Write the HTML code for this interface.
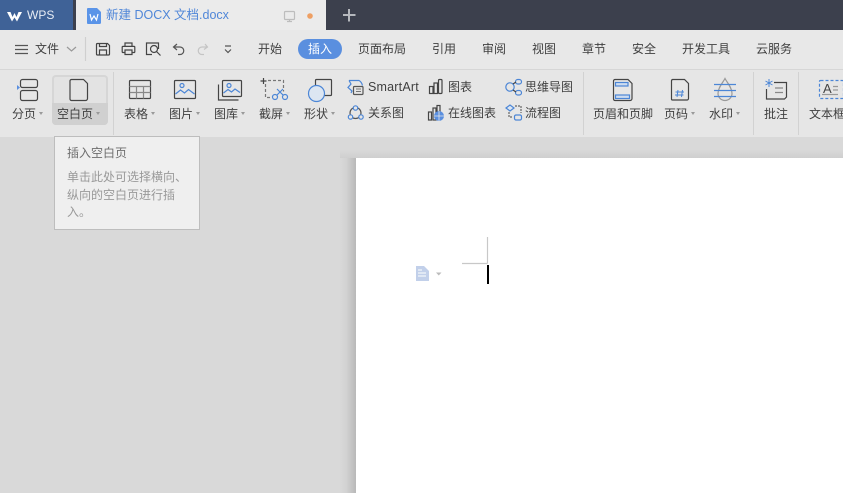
<!DOCTYPE html>
<html><head><meta charset="utf-8">
<style>
html,body{margin:0;padding:0;width:843px;height:493px;overflow:hidden;background:#d9d9d9}
body{position:relative;font-family:"Liberation Sans","Noto Sans CJK SC",sans-serif;font-size:12px;color:#3f3f3f}
.a{position:absolute}
.t{position:absolute;white-space:nowrap;line-height:16px;height:16px;transform:translateX(-50%)}
.l{position:absolute;white-space:nowrap;line-height:16px;height:16px}
svg{position:absolute;left:0;top:0;overflow:hidden}
.tri{position:absolute;width:0;height:0;border-left:2.5px solid transparent;border-right:2.5px solid transparent;border-top:3px solid #999}
.sep{position:absolute;width:1px;background:#d2d2d2;top:72px;height:63px}
</style></head><body>
<div class="a" style="left:0;top:0;width:843px;height:30px;background:#3c404d"></div>
<div class="a" style="left:0;top:0;width:73px;height:30px;background:#3f6297"></div>
<div class="a" style="left:76px;top:0;width:250px;height:30px;background:#ebebeb"></div>
<div class="a" style="left:0;top:30px;width:843px;height:39px;background:#e8e8e8;border-bottom:1px solid #d6d6d6;box-sizing:content-box"></div>
<div class="a" style="left:0;top:70px;width:843px;height:67px;background:#e6e6e6"></div>
<div class="a" style="left:0;top:137px;width:843px;height:356px;background:#d9d9d9"></div>

<div class="a" style="left:52px;top:75px;width:56px;height:50px;background:#e3e3e3;border-radius:4px;box-shadow:inset 0 0 0 2px #d6d6d6"></div>
<div class="a" style="left:52px;top:103px;width:56px;height:22px;background:#d0d0d0;border-radius:0 0 4px 4px"></div>

<div class="a" style="left:298px;top:39px;width:44px;height:20px;border-radius:10px;background:#5a8fdf"></div>

<div class="a" style="left:340px;top:158px;width:16px;height:335px;background:linear-gradient(90deg,#d9d9d9,#d2d2d2 40%,#b8b8b8)"></div>
<div class="a" style="left:340px;top:150px;width:503px;height:8px;background:linear-gradient(180deg,#d9d9d9,#cfcfcf)"></div>
<div class="a" style="left:356px;top:158px;width:487px;height:335px;background:#fff"></div>
<div class="a" style="left:54px;top:136px;width:144px;height:92px;background:#efefef;border:1px solid #bdbdbd"></div>

<svg width="843" height="493" fill="none" stroke-width="1.2">
<!-- WPS logo -->
<path d="M7 12h3.500l2 5 2-4 2 4 2-5h3.500l-5 9.500-2.500-4-2.500 4z" fill="#fff" stroke="none"/>
<!-- doc icon -->
<path d="M88 8h9l4 4v10.500a1.500 1.500 0 0 1-1.500 1.500h-11.500a1 1 0 0 1-1-1v-14a1 1 0 0 1 1-1z" fill="#5a94e8" stroke="none"/>
<path d="M90 14l1.500 6 2.500-4 2.500 4 1.500-6" stroke="#fff"/>
<!-- monitor, dot, plus -->
<rect x="284.500" y="11.500" width="10" height="8" rx="1" stroke="#bdbdbd"/><path d="M289.500 19.500v2M287 21.500h5" stroke="#bdbdbd"/>
<circle cx="310" cy="16" r="2.800" fill="#ee9f63"/>
<path d="M349 9v12.500M343 15h12.500" stroke="#b5b8bd" stroke-width="2"/>
<!-- menu line icon -->
<path d="M15 45.500h13M15 49.500h13M15 53.500h13" stroke="#555"/>
<path d="M67 47l4.500 4 4.500-4" stroke="#999"/>
<path d="M85.500 37v24" stroke="#cfcfcf"/>
<!-- save -->
<path d="M97.500 43.500h10l2 2v8.500a1 1 0 0 1-1 1h-11a1 1 0 0 1-1-1v-9.500a1 1 0 0 1 1-1z" stroke="#444"/><path d="M99.500 43.500v3h7v-3M99.500 55v-5h7v5" stroke="#444"/>
<!-- print -->
<path d="M125 46.500v-3.500h7v3.500M125 52.500h-2a.8.800 0 0 1-.8-.8v-4.500a.8.800 0 0 1 .8-.8h11a.8.800 0 0 1 .8.800v4.500a.8.800 0 0 1-.8.800h-2M125 50h7v4.500h-7z" stroke="#444"/>
<!-- preview -->
<path d="M152 54.500h-5.500v-11.500h12v6" stroke="#444"/><circle cx="154" cy="49" r="3.500" stroke="#444"/><path d="M156.500 51.500l4 4" stroke="#444"/>
<!-- undo redo -->
<path d="M177 44l-3.500 3 3.500 3M173.500 47h6.500a3.500 3.500 0 0 1 0 7.500h-2" stroke="#555"/>
<path d="M205 44l2.500 3-3.500 2.500M207 47h-5a3.500 3.500 0 0 0 0 7.500h2" stroke="#c4c4c4"/>
<path d="M225 46h6M225 49.500l3 3 3-3" stroke="#555"/>

<!-- 分页 -->
<rect x="20.500" y="79.500" width="17" height="8" rx="2" stroke="#444"/>
<rect x="20.500" y="90.500" width="17" height="10" rx="2" stroke="#444"/>
<path d="M17 85l3 2.500-3 2.500z" fill="#5a8fdf" stroke="none"/>
<!-- blank page -->
<path d="M71.500 79.500h12l4 4v15a2 2 0 0 1-2 2h-14a1.500 1.500 0 0 1-1.500-1.500v-18a1.500 1.500 0 0 1 1.500-1.500z" stroke="#444"/>
<!-- table -->
<rect x="129.500" y="80.500" width="21" height="18" rx="1" stroke="#444"/><path d="M129.500 86.500h21M129.500 92.500h21M136.500 86.500v12M143.500 86.500v12" stroke="#888"/>
<!-- picture -->
<rect x="174.500" y="80.500" width="21" height="18" rx="1" stroke="#444"/><circle cx="182" cy="85.500" r="2" stroke="#4c86d6"/><path d="M175.500 94l5-4 4 3 4-3.500 6 4.500" stroke="#4c86d6"/>
<!-- gallery -->
<rect x="222.500" y="80.500" width="19" height="16" rx="1" stroke="#444"/><path d="M218.500 84.500v15.500h20" stroke="#444"/><circle cx="229" cy="85.500" r="2" stroke="#4c86d6"/><path d="M223.500 93l4.500-3.500 3.500 2.500 3.500-3 5 3.500" stroke="#4c86d6"/>
<!-- screenshot -->
<path d="M263.500 78v6M260.500 81h6" stroke="#444"/>
<path d="M268 80.500h15.500v11M265.500 84v13.500h6" stroke="#777" stroke-dasharray="3 2"/>
<circle cx="275" cy="97" r="2.500" stroke="#4c86d6"/><circle cx="285" cy="97" r="2.500" stroke="#4c86d6"/><path d="M277 95l6-6M283 95l-6-6" stroke="#4c86d6"/>
<!-- shape -->
<rect x="315.500" y="79.500" width="16" height="16" rx="1" stroke="#444"/>
<circle cx="316.500" cy="93.500" r="8" fill="#dce6f2" stroke="#4c86d6"/>
<!-- smartart -->
<path d="M349 80.500h10c2 1 3 3 3.500 5M349 80.500l2 3.500-3 3.500 4 3.500-1 2" stroke="#4c86d6"/><rect x="353.500" y="86.500" width="9.500" height="8" rx="1" fill="#e6e6e6" stroke="#555"/><path d="M356 89h5M356 91.500h5" stroke="#777" stroke-width="1"/>
<!-- relation -->
<circle cx="355.500" cy="113" r="5.500" stroke="#555"/><circle cx="355.500" cy="108" r="2.200" fill="#e6e6e6" stroke="#4c86d6"/><circle cx="350.500" cy="117" r="2.200" fill="#e6e6e6" stroke="#4c86d6"/><circle cx="361" cy="117" r="2.200" fill="#e6e6e6" stroke="#4c86d6"/>
<!-- chart -->
<rect x="429.500" y="86.500" width="3.500" height="7" stroke="#444"/><rect x="434" y="83" width="3.500" height="10.500" stroke="#444"/><rect x="438.500" y="79.500" width="3.500" height="14" rx="1" stroke="#444"/>
<!-- online chart -->
<rect x="428.500" y="112" width="3" height="8" stroke="#444"/><rect x="433" y="108" width="3" height="12" stroke="#444"/><rect x="437" y="105.500" width="3" height="6" stroke="#444"/>
<circle cx="439" cy="116" r="5" fill="#5a8fdf" stroke="none"/><path d="M434 116h10M439 111v10" stroke="#e6e6e6" stroke-width=".8"/>
<!-- mind -->
<circle cx="510" cy="87" r="4.200" stroke="#4c86d6"/><rect x="515.500" y="79.500" width="6" height="4.500" rx="2.200" stroke="#4c86d6"/><rect x="515.500" y="90.500" width="6" height="4.500" rx="2.200" stroke="#4c86d6"/><path d="M513 84l3-2M513 90l3 2" stroke="#444"/>
<!-- flow -->
<path d="M506 108l4-3 4 3-4 3z" fill="#dce6f2" stroke="#4c86d6"/><rect x="514.500" y="115" width="7" height="5" rx="1.500" stroke="#4c86d6"/><path d="M515 106h6v7M509 112v5h4" stroke="#666" stroke-dasharray="2 1"/>
<!-- header footer -->
<path d="M615 79.500h13l4 4v15a2 2 0 0 1-2 2h-15a1.500 1.500 0 0 1-1.500-1.500v-18a1.500 1.500 0 0 1 1.500-1.500z" stroke="#444"/>
<rect x="615.500" y="82.500" width="12.500" height="3.500" fill="#cddcf0" stroke="#4c86d6"/><rect x="615.500" y="95" width="14" height="3.500" fill="#cddcf0" stroke="#4c86d6"/>
<!-- page number -->
<path d="M672.500 79.500h12l4 4v15a1.500 1.500 0 0 1-1.500 1.500h-14.500a1 1 0 0 1-1-1v-18a1.500 1.500 0 0 1 1-1.500z" stroke="#444"/>
<path d="M678 90l-1 7M682.500 90l-1 7M675.500 92h8.500M675 95h8.500" stroke="#4c86d6" stroke-width="1"/>
<!-- watermark -->
<path d="M725 78.500c2 4 7 9 7 15a7 7 0 0 1-14 0c0-6 5-11 7-15z" stroke="#999"/>
<path d="M714 84.500h22M714 90.500h22M714 96.500h22" stroke="#4c86d6"/>
<!-- comment -->
<path d="M774 82.500h12.500v14.500l-2 2h-18v-10" stroke="#444"/><path d="M775 88h8M775 92.500h8" stroke="#888"/>
<path d="M769 79v8M765.500 81l7 4M772.500 81l-7 4" stroke="#4c86d6" stroke-width="1"/>
<!-- textbox -->
<rect x="819.500" y="80.500" width="24" height="18" rx="1" stroke="#4c86d6" stroke-dasharray="3 2"/>
<path d="M833 86.500h5M833 90h5" stroke="#999"/><path d="M822 94.500h16" stroke="#999"/>
<!-- page corner -->
<path d="M487.500 237v26.500M462 263.500h25.500" stroke="#c8c8c8"/>
<rect x="487" y="265" width="2" height="19" fill="#000" stroke="none"/>
<path d="M416 266h8l5 5v10h-13z" fill="#c2d0ea" stroke="none"/>
<path d="M418 270h4M418 273h8M418 276h8" stroke="#fff" stroke-width="1"/>
<path d="M436 272.500h5.500l-2.750 3z" fill="#bbb" stroke="none"/>
</svg>

<div class="l" style="left:27px;top:7px;color:#e8edf5;font-size:12px">WPS</div>
<div class="l" style="left:106px;top:7px;color:#4f86d8;font-size:12.500px">新建 DOCX 文档.docx</div>
<div class="l" style="left:35px;top:41px">文件</div>
<div class="t" style="left:270px;top:41px">开始</div>
<div class="t" style="left:320px;top:41px;color:#fff">插入</div>
<div class="t" style="left:382px;top:41px">页面布局</div>
<div class="t" style="left:444px;top:41px">引用</div>
<div class="t" style="left:494px;top:41px">审阅</div>
<div class="t" style="left:544px;top:41px">视图</div>
<div class="t" style="left:594px;top:41px">章节</div>
<div class="t" style="left:644px;top:41px">安全</div>
<div class="t" style="left:706px;top:41px">开发工具</div>
<div class="t" style="left:774px;top:41px">云服务</div>

<div class="t" style="left:24px;top:106px">分页</div><div class="tri" style="left:39px;top:112px"></div>
<div class="t" style="left:75px;top:106px">空白页</div><div class="tri" style="left:96px;top:112px"></div>
<div class="t" style="left:136px;top:106px">表格</div><div class="tri" style="left:151px;top:112px"></div>
<div class="t" style="left:181px;top:106px">图片</div><div class="tri" style="left:196px;top:112px"></div>
<div class="t" style="left:226px;top:106px">图库</div><div class="tri" style="left:241px;top:112px"></div>
<div class="t" style="left:271px;top:106px">截屏</div><div class="tri" style="left:286px;top:112px"></div>
<div class="t" style="left:316px;top:106px">形状</div><div class="tri" style="left:331px;top:112px"></div>
<div class="l" style="left:368px;top:79px;font-size:12.500px;letter-spacing:.2px">SmartArt</div>
<div class="l" style="left:368px;top:105px">关系图</div>
<div class="l" style="left:448px;top:79px">图表</div>
<div class="l" style="left:448px;top:105px">在线图表</div>
<div class="l" style="left:525px;top:79px">思维导图</div>
<div class="l" style="left:525px;top:105px">流程图</div>
<div class="t" style="left:623px;top:106px">页眉和页脚</div>
<div class="t" style="left:676px;top:106px">页码</div><div class="tri" style="left:691px;top:112px"></div>
<div class="t" style="left:721px;top:106px">水印</div><div class="tri" style="left:736px;top:112px"></div>
<div class="t" style="left:776px;top:106px">批注</div>
<div class="l" style="left:809px;top:106px;width:34px;overflow:hidden">文本框</div>
<div class="l" style="left:823px;top:81px;font-size:13px;color:#444">A</div>

<div class="sep" style="left:113px"></div>
<div class="sep" style="left:583px"></div>
<div class="sep" style="left:753px"></div>
<div class="sep" style="left:798px"></div>

<div class="l" style="left:67px;top:145px;color:#6e6e6e">插入空白页</div>
<div class="l" style="left:67px;top:169px;color:#999">单击此处可选择横向、</div>
<div class="l" style="left:67px;top:187px;color:#999">纵向的空白页进行插</div>
<div class="l" style="left:67px;top:204px;color:#999">入。</div>
</body></html>
